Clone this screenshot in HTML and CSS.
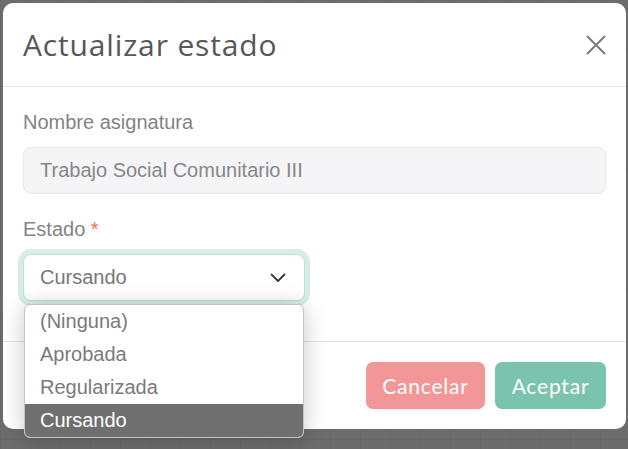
FILE: index.html
```html
<!DOCTYPE html>
<html lang="es">
<head>
<meta charset="utf-8">
<title>Actualizar estado</title>
<link rel="stylesheet" href="styles.css">
</head>
<body>
<div class="page">
  <div class="modal">
    <div class="modal-header">
      <h5 class="modal-title">Actualizar estado</h5>
      <button class="btn-close" aria-label="Cerrar">
        <svg width="20" height="20" viewBox="0 0 20 20"><path d="M1 1 L19 19 M19 1 L1 19" stroke="#7a7a7a" stroke-width="2" fill="none"/></svg>
      </button>
    </div>
    <div class="modal-body">
      <div class="field">
        <label class="label">Nombre asignatura</label>
        <div class="input is-disabled">Trabajo Social Comunitario III</div>
      </div>
      <div class="field field-last">
        <label class="label">Estado <span class="req">*</span></label>
        <div class="select-wrap">
          <div class="select">
            <span>Cursando</span>
            <svg class="chev" width="16" height="10" viewBox="0 0 16 10"><path d="M1.5 1.5 L8 8 L14.5 1.5" stroke="#343a40" stroke-width="1.8" fill="none" stroke-linecap="round" stroke-linejoin="round"/></svg>
          </div>
          <ul class="dropdown">
            <li class="opt">(Ninguna)</li>
            <li class="opt">Aprobada</li>
            <li class="opt">Regularizada</li>
            <li class="opt is-active">Cursando</li>
          </ul>
        </div>
      </div>
    </div>
    <div class="modal-footer">
      <button class="btn btn-cancel">Cancelar</button>
      <button class="btn btn-ok">Aceptar</button>
    </div>
  </div>
</div>
</body>
</html>
```
FILE: styles.css
```css
* { box-sizing: border-box; }
html, body { margin: 0; padding: 0; }
body {
  width: 628px;
  height: 449px;
  overflow: hidden;
  background-color: #6c6c6c;
  background-image:
    linear-gradient(to right, rgba(0,0,0,0.04) 1px, transparent 1px),
    linear-gradient(to bottom, rgba(0,0,0,0.04) 1px, transparent 1px);
  background-size: 30px 30px;
  background-position: 0 19px;
  font-family: "Liberation Sans", Arial, sans-serif;
}
.page {
  padding: 3px 2px 0 3px;
}
.modal {
  width: 623px;
  background: #fff;
  border-radius: 10px;
  display: flex;
  flex-direction: column;
}
.modal-header {
  height: 84px;
  padding: 0 20px;
  border-bottom: 1px solid #e6e6e6;
  display: flex;
  align-items: center;
  justify-content: space-between;
}
.modal-title {
  margin: 0;
  font-family: "Open Sans", Lato, sans-serif;
  font-weight: 400;
  font-size: 30px;
  line-height: 36px;
  letter-spacing: 0.85px;
  color: #575757;
}
.btn-close {
  border: 0;
  background: transparent;
  padding: 0;
  width: 20px;
  height: 20px;
  display: flex;
}
.modal-body {
  padding: 20px 20px 0 20px;
}
.field { margin-bottom: 20px; }
.field-last { margin-bottom: 20px; padding-bottom: 20px; }
.label {
  display: block;
  font-size: 20px;
  line-height: 30px;
  color: #838383;
  margin-bottom: 10px;
}
.req { color: #f2734f; }
.input {
  height: 47px;
  border: 1px solid #e7e8ec;
  border-radius: 8px;
  background: #f5f5f7;
  padding: 0 16px;
  font-size: 20px;
  line-height: 45px;
  color: #878787;
}
.select-wrap {
  position: relative;
  width: 282px;
}
.select {
  height: 47px;
  border: 1px solid #bfe2d6;
  border-radius: 8px;
  background: #fff;
  box-shadow: 0 0 0 5px #d7eee6;
  padding: 0 16px;
  font-size: 20px;
  color: #777;
  display: flex;
  align-items: center;
  justify-content: space-between;
}
.chev { margin-right: 2px; margin-top: 1px; }
.dropdown {
  position: absolute;
  top: 50px;
  left: 1px;
  width: 280px;
  margin: 0;
  padding: 0;
  list-style: none;
  background: #fff;
  border: 1px solid #c4c4c4;
  border-radius: 6px;
  overflow: hidden;
  box-shadow: 0 2px 22px rgba(0,0,0,0.22);
  z-index: 5;
}
.opt {
  height: 33px;
  line-height: 33px;
  padding-left: 15px;
  font-size: 20px;
  color: #7a7a7a;
}
.opt.is-active {
  background: #6f6f6f;
  color: #fff;
  line-height: 32px;
}
.modal-footer {
  border-top: 1px solid #e6e6e6;
  padding: 20px;
  display: flex;
  justify-content: flex-end;
  gap: 10px;
}
.btn {
  height: 47px;
  border: 0;
  border-radius: 7px;
  color: #fff;
  font-family: Lato, "Open Sans", sans-serif;
  font-size: 21px;
  letter-spacing: 0.8px;
  padding: 0;
  display: flex;
  align-items: center;
  justify-content: center;
}
.btn-cancel { width: 119px; background: #f29698; }
.btn-ok { width: 111px; background: #7ac4ad; }
```
